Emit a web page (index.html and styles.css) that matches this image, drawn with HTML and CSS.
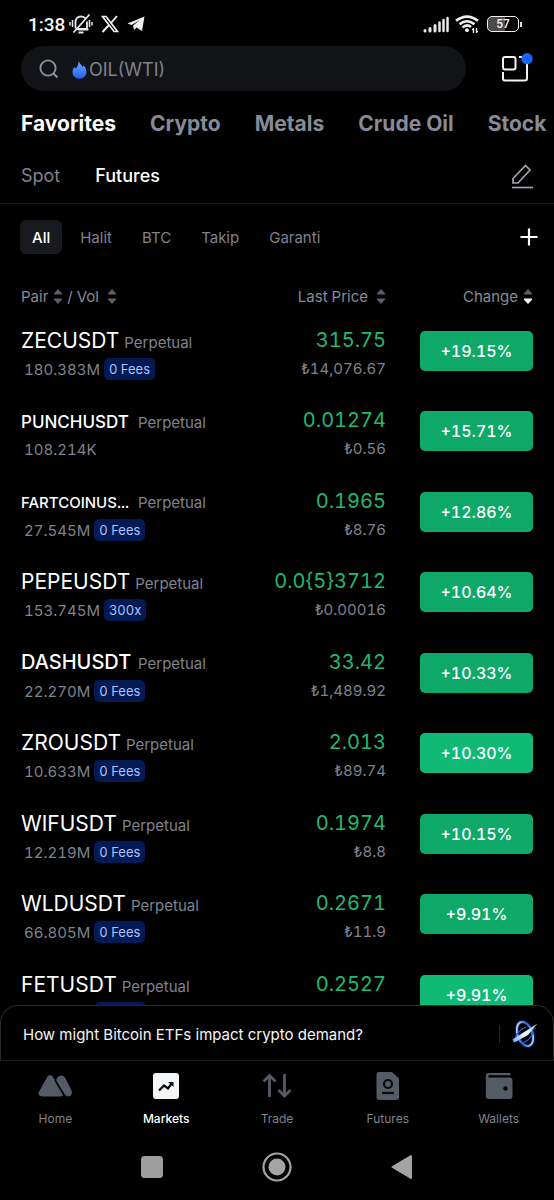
FILE: index.html
```html
<!DOCTYPE html>
<html lang="en">
<head>
<meta charset="utf-8">
<meta name="viewport" content="width=device-width, initial-scale=1">
<title>Markets</title>
<link rel="stylesheet" href="styles.css">
</head>
<body>
<svg class="sprite" aria-hidden="true">
  <symbol id="sort-up" viewBox="0 0 10 6"><path d="M5 0.5 9 5H1z" stroke-width="1" stroke="currentColor" stroke-linejoin="round" fill="currentColor"/></symbol>
  <symbol id="sort-down" viewBox="0 0 10 6"><path d="M5 5.5 9 1H1z" stroke-width="1" stroke="currentColor" stroke-linejoin="round" fill="currentColor"/></symbol>
</svg>
<div class="app">
  <div class="status">
    <div class="status-left">
      <span class="time">1:38</span>
      <svg width="24" height="22" viewBox="0 0 24 22" fill="none" stroke="#e8e8e8" stroke-width="1.8"><path d="M6.500 15.500V9.500Q6.500 3.500 12 3.300 15 3.400 16.500 5.500M18 8.500V16H8M19.500 16.500H9M4.500 19.500 20.500 1.500"/><path d="M9.500 19.500h5" stroke-width="2"/><path d="M3.500 7v7M1 9v3.500M20.500 7v7M23 9v3.500" stroke-width="1.500"/></svg>
      <svg class="x-icon" width="18" height="18" viewBox="0 0 18 18" fill="none" stroke="#f0f0f0"><path d="M1.500 1.500H5L16.500 16.500H13z" stroke-width="1.700"/><path d="M16 1 10 8M8 10 1.500 17" stroke-width="1.900"/></svg>
      <svg class="tg-icon" width="18" height="16" viewBox="0 0 18 16"><path d="M17.500.500 15 15 9.500 11.500 7 14 6 9.500 13 4 4.500 9 .500 7.500z" fill="#f0f0f0"/></svg>
    </div>
    <div class="status-right">
      <svg width="26" height="17" viewBox="0 0 26 17" fill="none" stroke="#e8e8e8" stroke-width="3" stroke-linecap="round"><path d="M2 14.500V15M7 12.500V15M12 9.500V15"/><path d="M16.500 6.500V15M20.500 4V15M24.500 2V15" stroke-width="2.500"/></svg>
      <svg width="24" height="18" viewBox="0 0 24 18" fill="none" stroke="#f0f0f0" stroke-width="2.600"><path d="M1 5.800Q12-2.700 23 5.800M4.500 9.300Q12 3.200 19.500 9.300M7.500 12.500Q12 8.500 16 12"/><circle cx="12" cy="15.200" r="1.900" fill="#f0f0f0" stroke="none"/><path d="M18.500 13v5M21.500 13v5M17 14.500h1.500M21.500 16.500H23" stroke-width="1.300"/></svg>
      <div class="battery"><span>57</span></div>
    </div>
  </div>

  <div class="search-row">
    <label class="search">
      <svg width="20" height="20" viewBox="0 0 20 20" fill="none" stroke="#8b909c" stroke-width="1.900"><circle cx="9" cy="9" r="7.600"/><path d="M14.500 14.500 18.500 18.500"/></svg>
      <svg class="flame" width="15" height="19" viewBox="0 0 15 19"><defs><linearGradient id="fl" x2="0" y2="1"><stop stop-color="#72a7ff"/><stop offset="1" stop-color="#1f62f4"/></linearGradient></defs><path d="M6.500.500C7 3 9.500 4.500 10.500 7L11.800 5.500C15 9 15 14 12.800 16.300 10 19.500 4.500 19.300 2 16.300-.500 13 .500 9 2.300 7L3.800 8.500C6 6 6.800 3.500 6.500.500z" fill="url(#fl)"/></svg>
      <input type="text" aria-label="Search" placeholder="OIL(WTI)">
    </label>
    <button class="icon-btn" aria-label="Widgets">
      <svg width="32" height="32" viewBox="0 0 32 32" fill="none" stroke="#f4f4f4" stroke-width="2"><rect x="2" y="4" width="12.500" height="12.500" rx="2"/><path d="M18 4H21M26 10V25.500Q26 27.500 24 27.500H4Q2 27.500 2 25.500V19"/><circle cx="26" cy="5.700" r="5.600" fill="#1763ff" stroke="none"/></svg>
    </button>
  </div>

  <nav class="tabs" aria-label="Categories">
    <a href="#" class="active">Favorites</a><a href="#">Crypto</a><a href="#">Metals</a><a href="#">Crude Oil</a><a href="#">Stock</a>
  </nav>

  <div class="subtabs">
    <a href="#">Spot</a><a href="#" class="active">Futures</a>
    <button class="icon-btn push" aria-label="Edit">
      <svg width="24" height="26" viewBox="0 0 24 26" fill="none" stroke="#a0a3aa" stroke-width="1.700"><path d="M3 20V15.500L15.500 2.500 20 7 8 20z"/><path d="M2 24.500H23"/></svg>
    </button>
  </div>

  <div class="filters">
    <button class="chip active">All</button><button class="chip">Halit</button><button class="chip">BTC</button><button class="chip">Takip</button><button class="chip">Garanti</button>
    <button class="icon-btn push" aria-label="Add group"><svg width="18" height="18" viewBox="0 0 18 18" stroke="#fff" stroke-width="2.200"><path d="M9 .500V17.500M.500 9H17.500"/></svg></button>
  </div>

  <main class="list">
    <table>
      <thead>
        <tr>
          <th class="pair"><div class="sorts"><button>Pair<span class="sort"><svg><use href="#sort-up"/></svg><svg><use href="#sort-down"/></svg></span></button><span>/</span><button class="vol-sort">Vol<span class="sort"><svg><use href="#sort-up"/></svg><svg><use href="#sort-down"/></svg></span></button></div></th>
          <th class="price"><div class="sorts end"><button class="wide">Last Price<span class="sort"><svg><use href="#sort-up"/></svg><svg><use href="#sort-down"/></svg></span></button></div></th>
          <th class="change"><div class="sorts end"><button>Change<span class="sort"><svg><use href="#sort-up"/></svg><svg class="on"><use href="#sort-down"/></svg></span></button></div></th>
        </tr>
      </thead>
      <tbody>
        <tr><td><div class="name"><b>ZECUSDT</b><span>Perpetual</span></div><div class="vol">180.383M<i>0 Fees</i></div></td><td class="price"><div class="last">315.75</div><div class="fiat">₺14,076.67</div></td><td class="change"><button>+19.15%</button></td></tr>
        <tr><td><div class="name"><b class="medium">PUNCHUSDT</b><span>Perpetual</span></div><div class="vol">108.214K</div></td><td class="price"><div class="last">0.01274</div><div class="fiat">₺0.56</div></td><td class="change"><button>+15.71%</button></td></tr>
        <tr><td><div class="name"><b class="small">FARTCOINUS...</b><span>Perpetual</span></div><div class="vol">27.545M<i>0 Fees</i></div></td><td class="price"><div class="last">0.1965</div><div class="fiat">₺8.76</div></td><td class="change"><button>+12.86%</button></td></tr>
        <tr><td><div class="name"><b>PEPEUSDT</b><span>Perpetual</span></div><div class="vol">153.745M<i>300x</i></div></td><td class="price"><div class="last">0.0{5}3712</div><div class="fiat">₺0.00016</div></td><td class="change"><button>+10.64%</button></td></tr>
        <tr><td><div class="name"><b class="fitted">DASHUSDT</b><span>Perpetual</span></div><div class="vol">22.270M<i>0 Fees</i></div></td><td class="price"><div class="last">33.42</div><div class="fiat">₺1,489.92</div></td><td class="change"><button>+10.33%</button></td></tr>
        <tr><td><div class="name"><b>ZROUSDT</b><span>Perpetual</span></div><div class="vol">10.633M<i>0 Fees</i></div></td><td class="price"><div class="last">2.013</div><div class="fiat">₺89.74</div></td><td class="change"><button class="flash">+10.30%</button></td></tr>
        <tr><td><div class="name"><b>WIFUSDT</b><span>Perpetual</span></div><div class="vol">12.219M<i>0 Fees</i></div></td><td class="price"><div class="last">0.1974</div><div class="fiat">₺8.8</div></td><td class="change"><button>+10.15%</button></td></tr>
        <tr><td><div class="name"><b>WLDUSDT</b><span>Perpetual</span></div><div class="vol">66.805M<i>0 Fees</i></div></td><td class="price"><div class="last">0.2671</div><div class="fiat">₺11.9</div></td><td class="change"><button>+9.91%</button></td></tr>
        <tr><td><div class="name"><b>FETUSDT</b><span>Perpetual</span></div><div class="vol pending"><i></i></div></td><td class="price"><div class="last">0.2527</div></td><td class="change"><button class="flash">+9.91%</button></td></tr>
      </tbody>
    </table>
  </main>

  <a href="#" class="prompt">
    <span>How might Bitcoin ETFs impact crypto demand?</span>
    <svg width="28" height="32" viewBox="0 0 28 32" fill="none"><defs><linearGradient id="orb" x2="1" y2="1"><stop stop-color="#f4faff"/><stop offset=".45" stop-color="#2c65dc"/><stop offset=".8" stop-color="#77b9ff"/><stop offset="1" stop-color="#f4faff"/></linearGradient><linearGradient id="bar" x1="0" y1="1" x2="1" y2="0"><stop stop-color="#62a4ff"/><stop offset=".5" stop-color="#fff"/><stop offset="1" stop-color="#a4aecb"/></linearGradient></defs><ellipse cx="14" cy="16" rx="7.500" ry="13" transform="rotate(-20 14 16)" stroke="#174bc0" stroke-opacity=".35" stroke-width="4"/><ellipse cx="14" cy="16" rx="7.500" ry="12.500" transform="rotate(-20 14 16)" stroke="url(#orb)" stroke-width="1.900"/><path d="M4 21Q6 13 15 9M12 25Q21 21 22 13" stroke="#2d65d0" stroke-width="1.300"/><path d="M3 23 24 9" stroke="#1b56d4" stroke-opacity=".5" stroke-width="4"/><path d="M1.500 21.500 11 15.500 26.500 5.500 17 17 3.500 24.500z" fill="url(#bar)"/></svg>
  </a>

  <nav class="bottom" aria-label="Main">
    <a href="#"><svg width="34" height="28" viewBox="0 0 34 28"><path d="M9.500 4.500Q12 1.500 14.500 4.500L25 20.500Q26.500 24.500 22 24.500H4Q-.500 24 .800 20z" fill="#555b66"/><path d="M19.500 5.500Q23.500 1.500 27 5.500L33.500 18.500Q35 23.500 30.500 24.500 27.500 24.500 26 21L18.500 10Q17.500 7.500 19.500 5.500z" fill="#555b66"/><path d="M17 8 27 25" stroke="#000" stroke-width="1.500"/></svg>Home</a>
    <a href="#" class="active"><svg width="28" height="28" viewBox="0 0 28 28"><rect x="1" y="1" width="26" height="26" rx="3" fill="#f4f5f7"/><path d="M7 18.500 12 13.500 16 16.500 20 11" stroke="#080a0d" stroke-width="2.200" fill="none"/><path d="M16 10H21.500V15z" fill="#080a0d"/></svg>Markets</a>
    <a href="#"><svg width="30" height="28" viewBox="0 0 30 28" fill="none" stroke="#555b66" stroke-width="2.800"><path d="M7.500 25V4M1.500 9.500 7.500 3.500 13.500 9.500M22.500 2V24M16.500 18 22.500 24 28.500 18"/></svg>Trade</a>
    <a href="#"><svg width="24" height="28" viewBox="0 0 24 28"><path d="M3 0H16L23 6.500V25Q23 28 20 28H3Q.500 28 .500 25V3Q.500 0 3 0z" fill="#555b66"/><circle cx="12" cy="12" r="4" fill="none" stroke="#080a0d" stroke-width="2.200"/><path d="M6 21H18" stroke="#080a0d" stroke-width="2.200"/></svg>Futures</a>
    <a href="#"><svg width="28" height="28" viewBox="0 0 28 28"><path d="M3.500 1H25.500V3.200H3.500V5.500H24.500Q27.500 5.500 27.500 8.500V24Q27.500 27 24.500 27H4Q.800 27 .800 24V4Q.800 1 3.500 1z" fill="#555b66"/><circle cx="20.500" cy="16.500" r="2.300" fill="#080a0d"/></svg>Wallets</a>
  </nav>

  <div class="system">
    <button aria-label="Recent apps"><svg width="30" height="30" viewBox="0 0 30 30"><rect x="4" y="4" width="22" height="22" rx="3.500" fill="#9c9c9c"/></svg></button>
    <button aria-label="Home screen"><svg width="30" height="30" viewBox="0 0 30 30"><circle cx="15" cy="15" r="13.500" fill="none" stroke="#a4a4a4" stroke-width="2.200"/><circle cx="15" cy="15" r="8.500" fill="#a4a4a4"/></svg></button>
    <button aria-label="Back"><svg width="30" height="30" viewBox="0 0 30 30"><path d="M5.500 15 24 4V26z" fill="#a4a4a4" stroke="#a4a4a4" stroke-width="2" stroke-linejoin="round"/></svg></button>
  </div>
</div>
</body>
</html>
```
FILE: styles.css
```css
* { box-sizing: border-box; }
body { margin: 0; background: #000; color: #f5f6f8; font-family: Inter, "Noto Sans", sans-serif; font-size: 16px; }
a { color: inherit; text-decoration: none; }
button { padding: 0; border: 0; background: none; color: inherit; font: inherit; cursor: pointer; }
svg { display: block; flex: none; }
.sprite { display: none; }
.app { display: flex; flex-direction: column; height: 100vh; overflow: hidden; }

.status { display: flex; flex: none; justify-content: space-between; align-items: center; height: 46px; padding: 2px 32px 0 28px; }
.status-left, .status-right { display: flex; align-items: center; }
.status-left { gap: 4px; }
.status-right { gap: 6px; }
.time { font: 500 19px Roboto, sans-serif; }
.x-icon { margin-left: 4px; }
.tg-icon { margin-left: 4px; }
.battery { position: relative; width: 32px; height: 16px; margin: 0 3px 0 2px; border: 1px solid #f0f0f0; border-radius: 5px; background: linear-gradient(90deg, #4a4a4a 57%, #000 57%); font: 500 12px/14px Roboto, sans-serif; text-align: center; }
.battery::after { content: ""; position: absolute; top: 5px; right: -4px; width: 2px; height: 5px; background: #ddd; }

.search-row { display: flex; flex: none; align-items: center; gap: 35px; padding-left: 21px; padding-right: 21px; }
.search { display: flex; flex: 1; align-items: center; min-width: 0; height: 45px; padding: 1px 18px 0; border-radius: 23px; background: #121317; }
.flame { margin: 0 2px 0 13px; }
.search input { flex: 1; min-width: 0; padding: 0; border: 0; outline: 0; background: none; color: #fff; font: 18px Inter, sans-serif; }
.search input::placeholder { color: #7e838e; opacity: 1; }

.tabs { display: flex; flex: none; align-items: center; gap: 34px; height: 65px; padding-left: 21px; overflow: hidden; white-space: nowrap; font-size: 21px; font-weight: 700; color: #868b97; }
.active { color: #fff; }

.subtabs { display: flex; flex: none; align-items: center; gap: 35px; height: 48px; padding: 0 20px 8px 21px; border-bottom: 1px solid #16171a; font-size: 18px; color: #7e838e; }
.subtabs .active { font-weight: 500; }
.push { margin-left: auto; }

.filters { display: flex; flex: none; align-items: center; gap: 6px; padding: 16px 16px 16px 20px; }
.chip { height: 34px; padding: 0 12px; border-radius: 6px; font-size: 15px; color: #7e838e; }
.chip.active { background: #181a20; color: #fff; font-weight: 500; }

.list { flex: 1; min-height: 0; overflow: hidden; padding: 0 21px; font-variant-numeric: tabular-nums; }
table { width: 100%; border-collapse: collapse; table-layout: fixed; }
th { height: 52px; padding: 0; font-size: 15px; font-weight: 400; color: #868b97; }
th.price { width: 130px; }
th.change { width: 147px; }
.sorts { display: flex; align-items: center; gap: 4px; }
.sorts.end { justify-content: flex-end; }
.sorts button { display: flex; align-items: center; gap: 5px; }
.sorts .vol-sort, .sorts .wide { gap: 8px; }
.sort { display: grid; gap: 3px; color: #5c5f67; }
.sort svg { width: 10px; height: 6px; }
.sort .on { color: #fff; }
td { height: 80px; padding: 2px 0 0; vertical-align: top; }
tr:nth-child(even) td { height: 81px; }
.name { display: flex; align-items: baseline; gap: 5px; height: 34px; line-height: 33px; white-space: nowrap; font-size: 15px; color: #7e838e; }
.name b { font-size: 21px; font-weight: 400; color: #fff; }
.name .fitted, .name .medium, .name .small { min-width: 112px; font-size: 20px; font-weight: 500; }
.name .medium { font-size: 17px; line-height: 36px; }
.name .small { font-size: 15px; line-height: 36px; }
.vol { display: flex; align-items: center; gap: 4px; height: 22px; padding-left: 3px; font-size: 15px; color: #7e838e; }
.vol i { height: 22px; padding: 0 5px; border-radius: 5px; background: #041a55; color: #a9c4ff; font-size: 13px; font-style: normal; line-height: 22px; }
.vol.pending { padding-left: 74px; }
.pending i { width: 51px; }
td.price { text-align: right; }
.last { height: 34px; font-size: 20px; line-height: 33px; color: #20b875; }
.fiat { font-size: 15px; line-height: 22px; color: #7e838e; }
td.change { text-align: right; padding-top: 9px; }
td.change button { width: 113px; height: 40px; border-radius: 5px; background: #0ea868; color: #fff; font-size: 16px; font-weight: 500; }
td.change .flash { background: #10ba76; }

.prompt { display: flex; flex: none; align-items: center; justify-content: space-between; height: 56px; padding: 2px 14px 0 22px; border: 1px solid #292a2d; border-bottom-color: #1b1c1f; border-radius: 18px 18px 0 0; font-size: 15px; }
.prompt svg { box-sizing: content-box; padding-left: 12px; background: linear-gradient(#25262a, #25262a) 0 50% / 1px 18px no-repeat; }
.bottom { display: grid; flex: none; grid-template-columns: repeat(5, 1fr); height: 72px; padding-top: 11px; font-size: 12px; color: #7e838e; }
.bottom a { display: flex; flex-direction: column; align-items: center; gap: 11px; }
.bottom .active { color: #fff; font-weight: 500; }
.system { display: flex; flex: none; justify-content: center; align-items: flex-start; gap: 95px; height: 67px; padding-top: 19px; }
```
